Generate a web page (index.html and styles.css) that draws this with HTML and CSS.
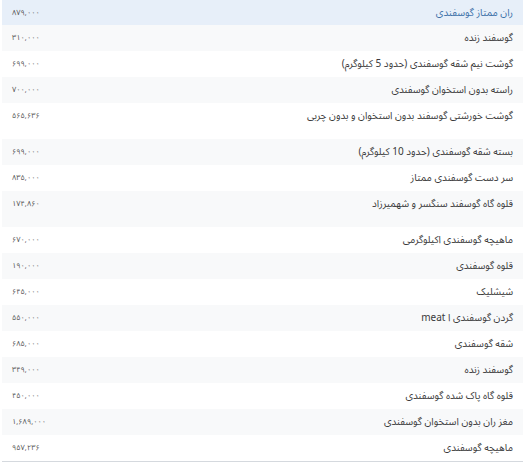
FILE: index.html
```html
<!DOCTYPE html>
<html lang="fa">
<head>
<meta charset="utf-8">
<link rel="stylesheet" href="styles.css">
</head>
<body>
<div class="table">
  <div class="row head"><span class="name">ران ممتاز گوسفندی</span><span class="price">۸۷۹,۰۰۰</span></div>
  <div class="row"><span class="name">گوسفند زنده</span><span class="price">۳۱۰,۰۰۰</span></div>
  <div class="row"><span class="name">گوشت نیم شقه گوسفندی (حدود 5 کیلوگرم)</span><span class="price">۶۹۹,۰۰۰</span></div>
  <div class="row"><span class="name">راسته بدون استخوان گوسفندی</span><span class="price">۷۰۰,۰۰۰</span></div>
  <div class="row tall"><span class="name">گوشت خورشتی گوسفند بدون استخوان و بدون چربی</span><span class="price">۵۶۵,۶۳۶</span></div>
  <div class="row"><span class="name">بسته شقه گوسفندی (حدود 10 کیلوگرم)</span><span class="price">۶۹۹,۰۰۰</span></div>
  <div class="row"><span class="name">سر دست گوسفندی ممتاز</span><span class="price">۸۳۵,۰۰۰</span></div>
  <div class="row tall"><span class="name">قلوه گاه گوسفند سنگسر و شهمیرزاد</span><span class="price">۱۷۴,۸۶۰</span></div>
  <div class="row"><span class="name">ماهیچه گوسفندی اکیلوگرمی</span><span class="price">۶۷۰,۰۰۰</span></div>
  <div class="row"><span class="name">قلوه گوسفندی</span><span class="price">۱۹۰,۰۰۰</span></div>
  <div class="row"><span class="name">شیشلیک</span><span class="price">۶۴۵,۰۰۰</span></div>
  <div class="row"><span class="name">گردن گوسفندی ا meat</span><span class="price">۵۵۰,۰۰۰</span></div>
  <div class="row"><span class="name">شقه گوسفندی</span><span class="price">۶۸۵,۰۰۰</span></div>
  <div class="row"><span class="name">گوسفند زنده</span><span class="price">۳۴۹,۰۰۰</span></div>
  <div class="row"><span class="name">قلوه گاه پاک شده گوسفندی</span><span class="price">۴۵۰,۰۰۰</span></div>
  <div class="row"><span class="name">مغز ران بدون استخوان گوسفندی</span><span class="price">۱,۶۸۹,۰۰۰</span></div>
  <div class="row"><span class="name">ماهیچه گوسفندی</span><span class="price">۹۵۷,۲۳۶</span></div>
</div>
</body>
</html>
```

FILE: styles.css
```css
html, body {
  margin: 0;
  padding: 0;
  background: #fff;
}
body {
  font-family: "Noto Sans Arabic", "DejaVu Sans", sans-serif;
  color: #3a3a3a;
}
.table {
  margin-left: 2px;
  border-bottom: 1px solid #d5d9de;
}
.row {
  display: grid;
  grid-template-columns: 1fr auto;
  align-items: start;
  height: 26px;
  box-sizing: border-box;
  padding: 6px 10px 0 10px;
  line-height: 14px;
}
.row:nth-child(even) {
  background: #f8f9fa;
}
.row.tall {
  height: 36px;
}
.row.head {
  background: #e7eff9;
  height: 25px;
}
.head .name {
  color: #3c6fa8;
}
.name {
  grid-column: 2;
  grid-row: 1;
  direction: rtl;
  font-size: 10px;
}
.price {
  grid-column: 1;
  grid-row: 1;
  justify-self: start;
  font-size: 7.5px;
  color: #555;
  direction: ltr;
}
```
